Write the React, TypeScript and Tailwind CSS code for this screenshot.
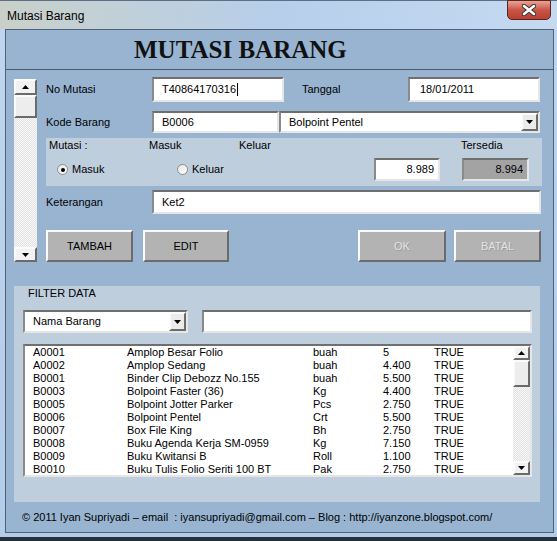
import React from "react";

const ui = "font-['Liberation_Sans',sans-serif] text-[11px] leading-[13px] text-black";
const edge = "border-2 border-t-[#6f6f6f] border-l-[#8a8a8a] border-r-[#e6e6e6] border-b-[#e6e6e6]";
const sunken = `${edge} bg-white`;
const raised = "border-2 border-t-[#fbfbfb] border-l-[#fbfbfb] border-r-[#6b6b6b] border-b-[#6b6b6b]";
const checker = "[background-image:repeating-conic-gradient(#f8f8f8_0%_25%,#e2e2e2_0%_50%)] [background-size:2px_2px]";

const rows = [
  ["A0001", "Amplop Besar Folio", "buah", "5", "TRUE"],
  ["A0002", "Amplop Sedang", "buah", "4.400", "TRUE"],
  ["B0001", "Binder Clip Debozz No.155", "buah", "5.500", "TRUE"],
  ["B0003", "Bolpoint Faster (36)", "Kg", "4.400", "TRUE"],
  ["B0005", "Bolpoint Jotter Parker", "Pcs", "2.750", "TRUE"],
  ["B0006", "Bolpoint Pentel", "Crt", "5.500", "TRUE"],
  ["B0007", "Box File King", "Bh", "2.750", "TRUE"],
  ["B0008", "Buku Agenda Kerja SM-0959", "Kg", "7.150", "TRUE"],
  ["B0009", "Buku Kwitansi B", "Roll", "1.100", "TRUE"],
  ["B0010", "Buku Tulis Folio Seriti 100 BT", "Pak", "2.750", "TRUE"],
];

function Tri({ up = false }: { up?: boolean }) {
  return (
    <svg width="7" height="4" viewBox="0 0 7 4">
      <path d={up ? "M0 4h7L3.5 0z" : "M0 0h7L3.5 4z"} fill="#000" />
    </svg>
  );
}

function ArrowBtn({ up = false, h }: { up?: boolean; h: string }) {
  return (
    <div className={`flex w-full shrink-0 items-center justify-center bg-[#f2f2f2] ${raised} ${h}`}>
      <Tri up={up} />
    </div>
  );
}

function Field({ w, text, cls = "" }: { w: string; text?: string; cls?: string }) {
  return (
    <div className={`flex h-full items-center px-[8px] ${sunken} ${w} ${cls}`}>
      <span className="truncate">{text}</span>
    </div>
  );
}

function Combo({ w, text }: { w: string; text: string }) {
  return (
    <div className={`flex h-full items-center ${sunken} ${w}`}>
      <span className="flex-1 truncate pl-[8px]">{text}</span>
      <div className={`flex h-full w-[17px] items-center justify-center bg-[#ebebeb] ${raised}`}>
        <Tri />
      </div>
    </div>
  );
}

function Radio({ on, label }: { on?: boolean; label: string }) {
  return (
    <div className="flex items-center gap-[4px]">
      <div className="flex h-[11px] w-[11px] items-center justify-center rounded-full border border-[#8d8d8d] bg-gradient-to-br from-[#e4e4e4] to-white">
        {on && <div className="h-[4px] w-[4px] rounded-full bg-black" />}
      </div>
      <span>{label}</span>
    </div>
  );
}

function Btn({ label, w, off = false }: { label: string; w: string; off?: boolean }) {
  return (
    <div
      className={`flex h-full items-center justify-center bg-[#b3b3b3] ${raised} ${w} ${
        off ? "text-[#e2e2e2] [text-shadow:1px_1px_0_#9c9c9c]" : ""
      }`}
    >
      {label}
    </div>
  );
}

export default function App() {
  return (
    <div className={`flex h-[541px] w-[557px] flex-col overflow-hidden bg-gradient-to-b from-[#bfd6ee] to-[#b3cce8] ${ui}`}>
      {/* title bar */}
      <div className="flex h-[29px] shrink-0 items-start justify-between border-t border-[#5c6f86] bg-gradient-to-r from-[#c9d0c9] via-[#b7cfeb] to-[#c5daf1] pl-[7px] pr-[6px]">
        <span className="mt-[8px] text-[12px] leading-[14px] text-black">Mutasi Barang</span>
        <div className="-mt-px flex h-[20px] w-[44px] items-center justify-center rounded-b-[5px] border border-[#5a2520] bg-gradient-to-b from-[#e8a497] via-[#c95546] to-[#b8402f]">
          <svg width="14" height="12" viewBox="0 0 14 12">
            <path d="M2 2l10 8M12 2L2 10" stroke="#3a3a3a" strokeWidth="4.5" strokeLinecap="round" />
            <path d="M2 2l10 8M12 2L2 10" stroke="#ffffff" strokeWidth="2.5" strokeLinecap="round" />
          </svg>
        </div>
      </div>

      {/* client area */}
      <div className="ml-[5px] flex h-[504px] w-[549px] shrink-0 flex-col border border-[#50627a] bg-[#98b4d1]">
        <div className="flex h-[40px] shrink-0 items-center border-b border-[#4c5b6c] pl-[128px]">
          <span className="font-['Liberation_Serif',serif] text-[25px] font-bold leading-[28px] text-[#111]">
            MUTASI BARANG
          </span>
        </div>

        <div className="flex pl-[8px] pt-[7px]">
          {/* left scroll */}
          <div className={`mt-[2px] flex h-[183px] w-[23px] flex-col justify-between ${checker}`}>
            <div className="flex flex-col">
              <ArrowBtn up h="h-[16px]" />
              <div className={`h-[23px] w-full bg-[#ededed] ${raised}`} />
            </div>
            <ArrowBtn h="h-[15px]" />
          </div>

          <div className="ml-[9px] flex w-[496px] flex-col">
            <div className="flex h-[25px] items-center">
              <span className="w-[106px]">No Mutasi</span>
              <div className={`flex h-full w-[132px] items-center pl-[8px] ${sunken}`}>
                <span>T40864170316</span>
                <span className="ml-px h-[13px] w-px bg-black" />
              </div>
              <span className="ml-[18px] w-[106px]">Tanggal</span>
              <Field w="w-[132px]" text="18/01/2011" cls="pl-[10px]" />
            </div>

            <div className="mt-[9px] flex h-[22px] items-center">
              <span className="w-[106px]">Kode Barang</span>
              <Field w="w-[127px]" text="B0006" />
              <Combo w="w-[261px]" text="Bolpoint Pentel" />
            </div>

            <div className="mt-[5px] flex h-[48px] w-[496px] flex-col bg-[#bfcedd]">
              <div className="flex h-[14px] items-center pl-[3px]">
                <span className="w-[100px]">Mutasi :</span>
                <span className="w-[90px]">Masuk</span>
                <span className="w-[222px]">Keluar</span>
                <span>Tersedia</span>
              </div>
              <div className="mt-[6px] flex h-[23px] items-center">
                <div className="ml-[11px] w-[120px]">
                  <Radio on label="Masuk" />
                </div>
                <div className="w-[197px]">
                  <Radio label="Keluar" />
                </div>
                <div className={`flex h-full w-[66px] items-center justify-end pr-[4px] ${sunken}`}>8.989</div>
                <div className={`ml-[22px] flex h-full w-[67px] items-center justify-end bg-[#a3a3a3] pr-[4px] ${edge}`}>
                  8.994
                </div>
              </div>
            </div>

            <div className="mt-[4px] flex h-[24px] items-center">
              <span className="w-[106px]">Keterangan</span>
              <Field w="w-[389px]" text="Ket2" />
            </div>

            <div className="mt-[16px] flex h-[32px]">
              <Btn label="TAMBAH" w="w-[87px]" />
              <Btn label="EDIT" w="ml-[10px] w-[86px]" />
              <Btn label="OK" w="ml-[129px] w-[88px]" off />
              <Btn label="BATAL" w="ml-[8px] w-[87px]" off />
            </div>
          </div>
        </div>

        {/* filter */}
        <div className="ml-[8px] mt-[24px] flex h-[216px] w-[526px] flex-col bg-[#bfcedd] pl-[9px]">
          <span className="mt-px pl-[5px]">FILTER DATA</span>
          <div className="mt-[10px] flex h-[23px]">
            <Combo w="w-[165px]" text="Nama Barang" />
            <Field w="ml-[14px] w-[330px]" />
          </div>
          <div className={`mt-[11px] flex h-[133px] w-[509px] ${sunken}`}>
            <div className="flex-1 pl-[8px]">
              {rows.map((r) => (
                <div key={r[0]} className="flex h-[13px] items-center whitespace-nowrap">
                  <span className="w-[94px]">{r[0]}</span>
                  <span className="w-[186px]">{r[1]}</span>
                  <span className="w-[70px]">{r[2]}</span>
                  <span className="w-[51px]">{r[3]}</span>
                  <span>{r[4]}</span>
                </div>
              ))}
            </div>
            <div className={`flex w-[17px] flex-col justify-between ${checker}`}>
              <div className="flex flex-col">
                <ArrowBtn up h="h-[14px]" />
                <div className={`h-[27px] w-full bg-[#ededed] ${raised}`} />
              </div>
              <ArrowBtn h="h-[14px]" />
            </div>
          </div>
        </div>

        <div className="mt-[9px] whitespace-pre pl-[16px]">
          © 2011 Iyan Supriyadi – email  : iyansupriyadi@gmail.com – Blog : http://iyanzone.blogspot.com/
        </div>
      </div>

      <div className="h-[4px] shrink-0" />
      <div className="h-[4px] shrink-0 bg-[#27313c]" />
    </div>
  );
}
